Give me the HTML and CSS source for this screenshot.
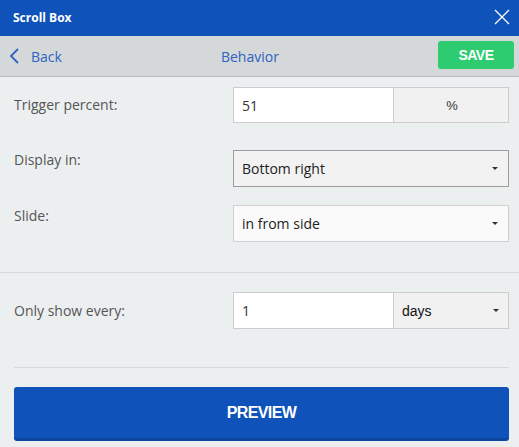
FILE: index.html
```html
<!DOCTYPE html>
<html>
<head>
<meta charset="utf-8">
<link rel="stylesheet" href="styles.css">
</head>
<body>
<div class="titlebar">
  <span class="title">Scroll Box</span>
  <svg class="close" width="16" height="16" viewBox="0 0 16 16"><path d="M1 1 L15 15 M15 1 L1 15" stroke="#fff" stroke-width="1.3" fill="none"/></svg>
</div>
<div class="nav">
  <div class="back">
    <svg class="chev" width="11" height="16" viewBox="0 0 11 16"><path d="M9 1 L2 8 L9 15" stroke="#2f62c4" stroke-width="1.8" fill="none"/></svg>
    <span>Back</span>
  </div>
  <div class="navtitle">Behavior</div>
  <div class="save">SAVE</div>
</div>
<div class="content">
  <div class="row row-1">
    <div class="label center">Trigger percent:</div>
    <div class="group">
      <div class="input">51</div>
      <div class="addon addon-pct">%</div>
    </div>
  </div>
  <div class="row row-2">
    <div class="label">Display in:</div>
    <div class="select select-dark"><span>Bottom right</span><i class="caret"></i></div>
  </div>
  <div class="row row-3">
    <div class="label top1">Slide:</div>
    <div class="select select-light"><span>in from side</span><i class="caret"></i></div>
  </div>
  <div class="sep-full"></div>
  <div class="row row-4">
    <div class="label center">Only show every:</div>
    <div class="group">
      <div class="input">1</div>
      <div class="addon addon-days"><span>days</span><i class="caret"></i></div>
    </div>
  </div>
  <div class="sep-inner"></div>
  <div class="preview">PREVIEW</div>
</div>
</body>
</html>
```
FILE: styles.css
```css
* { box-sizing: border-box; }
html, body { margin: 0; padding: 0; }
body {
  width: 519px;
  height: 447px;
  overflow: hidden;
  background: #eceff0;
  font-family: "Open Sans", "Noto Sans", sans-serif;
}
.titlebar {
  height: 36px;
  background: #0f52b9;
  display: flex;
  align-items: center;
  justify-content: space-between;
  padding: 0 9px 0 13px;
}
.title {
  color: #fff;
  font-weight: 700;
  font-size: 12px;
  padding-bottom: 2px;
}
.close { display: block; margin-top: -2px; }
.nav {
  height: 41px;
  background: #d5d8d9;
  border-bottom: 1px solid #b9bcbe;
  display: flex;
  align-items: center;
  padding: 0 5px 0 9px;
}
.back {
  display: flex;
  align-items: center;
  color: #2f62c4;
  font-size: 14px;
}
.chev { display: block; margin-right: 11px; }
.navtitle {
  flex: 1;
  text-align: center;
  color: #2f62c4;
  font-size: 14px;
}
.save {
  width: 76px;
  height: 28px;
  background: #2ecc71;
  border-radius: 3px;
  color: #fff;
  font-family: "Liberation Sans", Arial, sans-serif;
  font-weight: 700;
  font-size: 14px;
  letter-spacing: -0.5px;
  display: flex;
  align-items: center;
  justify-content: center;
  margin-top: -2px;
}
.content { padding-top: 10px; }
.row {
  display: grid;
  grid-template-columns: 219px 276px;
  margin-left: 14px;
}
.label {
  color: #555;
  font-size: 14px;
  line-height: 20px;
}
.label.center { align-self: center; }
.label.top1 { padding-top: 1px; }
.row-1 { height: 36px; margin-bottom: 27px; }
.row-2 { height: 37px; margin-bottom: 18px; }
.row-3 { height: 37px; margin-bottom: 30px; }
.row-4 { height: 37px; margin-top: 19px; margin-bottom: 38px; }
.group { display: flex; height: 100%; }
.input {
  width: 160px;
  background: #fff;
  border: 1px solid #ccc;
  border-right: none;
  padding-left: 8px;
  display: flex;
  align-items: center;
  color: #333;
  font-size: 14px;
}
.addon {
  flex: 1;
  background: #f1f1f1;
  border: 1px solid #ccc;
  display: flex;
  align-items: center;
  font-family: "Liberation Sans", Arial, sans-serif;
  color: #111;
  font-size: 14px;
}
.addon-pct { justify-content: center; font-size: 13px; color: #333; padding-left: 2px; }
.addon-days { justify-content: space-between; padding: 0 9px 0 8px; }
.select {
  display: flex;
  align-items: center;
  justify-content: space-between;
  padding: 0 10px 0 8px;
  color: #222;
  font-size: 14px;
}
.select-dark { background: #f2f2f2; border: 1px solid #9c9c9c; }
.select-light { background: #fafafa; border: 1px solid #cfcfcf; }
.caret {
  width: 0; height: 0;
  border-left: 3px solid transparent;
  border-right: 3px solid transparent;
  border-top: 3px solid #333;
}
.sep-full { height: 1px; background: #d7dadb; }
.sep-inner { height: 1px; background: #d7dadb; margin: 0 10px 0 14px; }
.preview {
  margin: 19px 10px 0 14px;
  height: 54px;
  background: #0f52b9;
  border-bottom: 3px solid #0c469f;
  border-radius: 3px;
  color: #fff;
  font-family: "Liberation Sans", Arial, sans-serif;
  font-weight: 700;
  font-size: 16px;
  letter-spacing: -0.6px;
  display: flex;
  align-items: center;
  justify-content: center;
}
```
